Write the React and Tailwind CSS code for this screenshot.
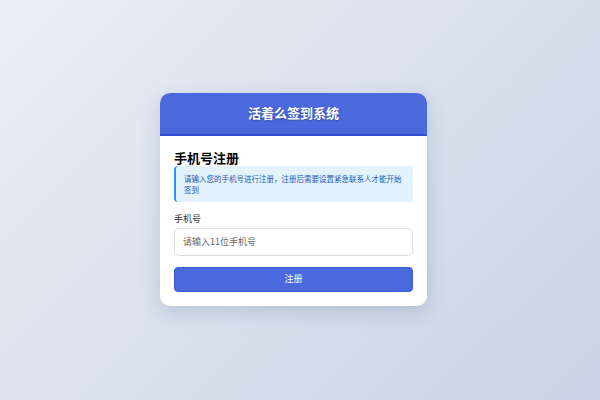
import React, { useState } from "react"

export default function App() {
  const [phone, setPhone] = useState("")

  return (
    <div
      className="w-[600px] h-[400px] flex items-center justify-center pr-[13px] pb-[2px] bg-[linear-gradient(135deg,#eaeff6_0%,#c9d3e3_100%)]"
      style={{ fontFamily: '"Noto Sans CJK SC", "Noto Sans", sans-serif' }}
    >
      <div className="w-[267px] bg-white rounded-[10px] overflow-hidden shadow-[0_6px_20px_rgba(40,60,110,0.18)]">
        <div className="h-[43px] flex items-center justify-center bg-[#4a69dd] border-b-2 border-[#2f4fce]">
          <h1 className="text-white text-[13px] font-bold [text-shadow:0_1px_2px_rgba(0,0,0,0.3)]">
            活着么签到系统
          </h1>
        </div>

        <div className="px-[14px] pt-[14px] pb-[14px]">
          <h2 className="text-[13px] font-bold text-black leading-[16px]">手机号注册</h2>
          <div className="bg-[#e3f2fd] border-l-2 border-[#2196f3] rounded-[4px] pl-[8px] pr-[8px] py-[7px]">
            <p className="text-[7.5px] leading-[11px] text-[#1a5bb5]">
              请输入您的手机号进行注册，注册后需要设置紧急联系人才能开始签到
            </p>
          </div>

          <label className="block mt-[10px] text-[9px] text-[#333] leading-[14px]">手机号</label>
          <input
            type="tel"
            value={phone}
            onChange={(e) => setPhone(e.target.value)}
            placeholder="请输入11位手机号"
            className="mt-[2px] block w-full h-[28px] px-[8px] border border-[#dddddd] rounded-[5px] text-[9px] text-[#333] placeholder:text-[#666] outline-none"
          />

          <button className="mt-[11px] block w-full h-[25px] bg-[#4a69dd] border border-[#3a58d0] rounded-[4px] text-white text-[9px]">
            注册
          </button>
        </div>
      </div>
    </div>
  )
}
